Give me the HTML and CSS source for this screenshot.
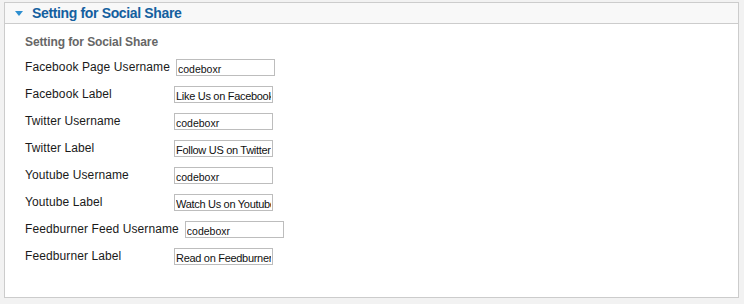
FILE: index.html
```html
<!DOCTYPE html>
<html>
<head>
<meta charset="utf-8">
<link rel="stylesheet" href="styles.css">
</head>
<body>
<div class="panel">
  <div class="panel-head">
    <span class="caret"></span>
    <h3 class="panel-title">Setting for Social Share</h3>
  </div>
  <div class="panel-body">
    <div class="sub-title">Setting for Social Share</div>
    <ul class="fields">
      <li class="field"><label class="field-label">Facebook Page Username</label><input class="field-input" type="text" value="codeboxr"></li>
      <li class="field"><label class="field-label">Facebook Label</label><input class="field-input long-text" type="text" value="Like Us on Facebook"></li>
      <li class="field"><label class="field-label">Twitter Username</label><input class="field-input" type="text" value="codeboxr"></li>
      <li class="field"><label class="field-label">Twitter Label</label><input class="field-input long-text" type="text" value="Follow US on Twitter"></li>
      <li class="field"><label class="field-label">Youtube Username</label><input class="field-input" type="text" value="codeboxr"></li>
      <li class="field"><label class="field-label">Youtube Label</label><input class="field-input long-text" type="text" value="Watch Us on Youtube"></li>
      <li class="field"><label class="field-label">Feedburner Feed Username</label><input class="field-input" type="text" value="codeboxr"></li>
      <li class="field"><label class="field-label">Feedburner Label</label><input class="field-input long-text" type="text" value="Read on Feedburner"></li>
    </ul>
  </div>
</div>
</body>
</html>
```
FILE: styles.css
```css
html, body {
  margin: 0;
  background: #f2f2f2;
}
body {
  padding: 2px 5px 6px 4px;
  font-family: "Liberation Sans", Arial, sans-serif;
  color: #222;
}
.panel {
  box-sizing: border-box;
  height: 296px;
  border: 1px solid #cccccc;
  background: #ffffff;
}
.panel-head {
  display: flex;
  align-items: center;
  height: 20px;
  background: #f8f8f8;
  border-bottom: 1px solid #cccccc;
  padding-left: 10px;
}
.caret {
  width: 0;
  height: 0;
  border-left: 4px solid transparent;
  border-right: 4px solid transparent;
  border-top: 5px solid #2e8fd0;
  margin-top: 1px;
  margin-right: 9px;
}
.panel-title {
  margin: 0;
  font-size: 14px;
  letter-spacing: -0.35px;
  font-weight: bold;
  color: #14609f;
  line-height: 18px;
}
.panel-body {
  padding: 10px 0 0 20px;
}
.sub-title {
  font-size: 12px;
  font-weight: bold;
  color: #666666;
  line-height: 16px;
  letter-spacing: -0.1px;
}
.fields {
  list-style: none;
  margin: 9px 0 0;
  padding: 0;
}
.field {
  display: flex;
  align-items: flex-start;
  height: 27px;
}
.field-label {
  min-width: 143px;
  margin-right: 6px;
  font-size: 12px;
  line-height: 14px;
  padding-top: 1px;
  letter-spacing: 0.1px;
  color: #1a1a1a;
}
.field-input {
  box-sizing: border-box;
  width: 99px;
  height: 17px;
  margin: 0;
  padding: 2px 1px 0;
  border: 1px solid #bdbdbd;
  background: #fff;
  font-family: "Liberation Sans", Arial, sans-serif;
  font-size: 10.5px;
  line-height: 13px;
  color: #111;
  outline: none;
}
.long-text {
  font-size: 11px;
  letter-spacing: -0.3px;
}
```
